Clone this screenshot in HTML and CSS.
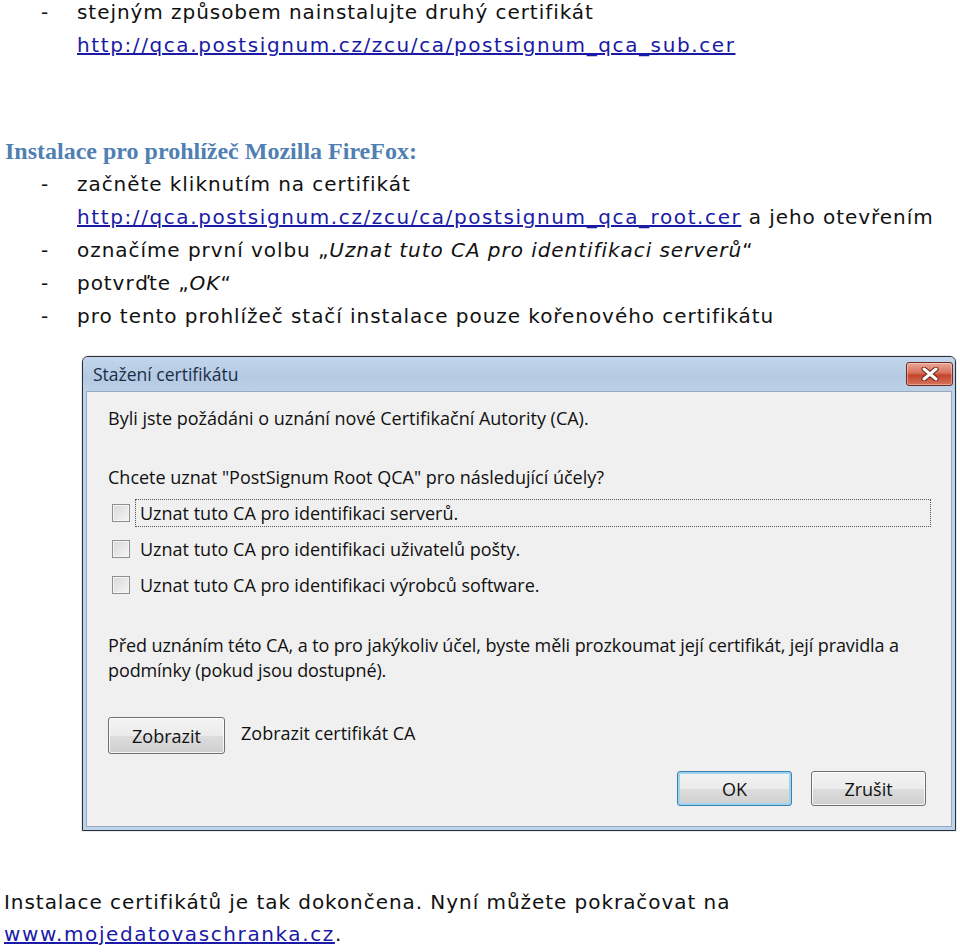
FILE: index.html
```html
<!DOCTYPE html>
<html lang="cs">
<head>
  <meta charset="UTF-8">
  <title>Instalace certifikátů</title>
  <link rel="stylesheet" href="styles.css">
</head>
<body>

  <div class="steps steps-top">
    <div class="step">
      <span class="dash">-</span>
      <span class="step-text">stejným způsobem nainstalujte druhý certifikát<br>
        <a href="#">http://qca.postsignum.cz/zcu/ca/postsignum_qca_sub.cer</a></span>
    </div>
  </div>

  <h2 class="heading">Instalace pro prohlížeč Mozilla FireFox:</h2>

  <div class="steps">
    <div class="step">
      <span class="dash">-</span>
      <span class="step-text">začněte kliknutím na certifikát<br>
        <a href="#">http://qca.postsignum.cz/zcu/ca/postsignum_qca_root.cer</a> a jeho otevřením</span>
    </div>
    <div class="step">
      <span class="dash">-</span>
      <span class="step-text">označíme první volbu „<i>Uznat tuto CA pro identifikaci serverů</i>“</span>
    </div>
    <div class="step">
      <span class="dash">-</span>
      <span class="step-text">potvrďte „<i>OK</i>“</span>
    </div>
    <div class="step">
      <span class="dash">-</span>
      <span class="step-text">pro tento prohlížeč stačí instalace pouze kořenového certifikátu</span>
    </div>
  </div>

  <!-- screenshot of the Firefox dialog -->
  <div class="dialog">
    <div class="titlebar">
      <span class="title">Stažení certifikátu</span>
      <span class="close">
        <svg width="22" height="14" viewBox="0 0 22 14">
          <path d="M5 2 L17 12 M17 2 L5 12" stroke="#6a2418" stroke-width="5" stroke-linecap="round"/>
          <path d="M5 2 L17 12 M17 2 L5 12" stroke="#ffffff" stroke-width="3" stroke-linecap="round"/>
        </svg>
      </span>
    </div>
    <div class="content">
      <p class="line">Byli jste požádáni o uznání nové Certifikační Autority (CA).</p>
      <p class="line question">Chcete uznat "PostSignum Root QCA" pro následující účely?</p>

      <div class="checks">
        <label class="check"><span class="box"></span><span class="check-label focused">Uznat tuto CA pro identifikaci serverů.</span></label>
        <label class="check"><span class="box"></span><span class="check-label">Uznat tuto CA pro identifikaci uživatelů pošty.</span></label>
        <label class="check"><span class="box"></span><span class="check-label">Uznat tuto CA pro identifikaci výrobců software.</span></label>
      </div>

      <p class="warning">Před uznáním této CA, a to pro jakýkoliv účel, byste měli prozkoumat její certifikát, její pravidla a podmínky (pokud jsou dostupné).</p>

      <div class="view-row">
        <button class="btn btn-view">Zobrazit</button>
        <span>Zobrazit certifikát CA</span>
      </div>

      <div class="actions">
        <button class="btn btn-default">OK</button>
        <button class="btn">Zrušit</button>
      </div>
    </div>
  </div>

  <p class="footer">Instalace certifikátů je tak dokončena. Nyní můžete pokračovat na<br>
    <a href="#">www.mojedatovaschranka.cz</a>.</p>

</body>
</html>
```

FILE: styles.css
```css
/* Page */
body {
  margin: 0;
  background: #fff;
  color: #111;
  font-family: 'DejaVu Sans', sans-serif;
  font-size: 20px;
  letter-spacing: 0.95px;
  line-height: 33px;
}

a {
  color: #1a1aa6;
  text-decoration: underline;
  letter-spacing: 1.6px;
}

.steps-top {
  margin-top: -4px;
}

.step {
  display: flex;
}

.dash {
  width: 36px;
  padding-left: 41px;
  flex-shrink: 0;
}

.step-text i {
  font-style: italic;
}

.heading {
  margin: 73px 0 0 5px;
  font-family: 'Liberation Serif', serif;
  font-size: 24px;
  font-weight: bold;
  letter-spacing: 0;
  line-height: 33px;
  color: #4f7fb3;
}

/* Dialog */
.dialog {
  margin: 23px 0 0 82px;
  width: 872px;
  border: 1px solid #27303a;
  border-radius: 6px 6px 0 0;
  background: #bcd3ea;
  font-family: 'Open Sans', sans-serif;
  font-size: 18px;
  letter-spacing: 0;
  color: #111;
  box-shadow: 0 0 0 1px rgba(0, 0, 0, 0.08);
}

.titlebar {
  height: 34px;
  display: flex;
  align-items: center;
  justify-content: space-between;
  padding: 0 2px 0 10px;
  background: linear-gradient(#c3d6ec, #b4cae2 60%, #bdd1e7);
  border-radius: 5px 5px 0 0;
}

.title {
  color: #1b2d48;
  font-size: 17.5px;
}

.close {
  width: 45px;
  height: 22px;
  display: flex;
  align-items: center;
  justify-content: center;
  border: 1px solid #6d2d23;
  border-radius: 3px;
  background: linear-gradient(#e9a898, #d7715c 45%, #c4442c 55%, #d6735a);
  box-shadow: inset 0 0 0 1px rgba(255, 255, 255, 0.35);
}

.content {
  margin: 0 3px 3px 3px;
  padding: 14px 20px 20px 21px;
  background: #f0f0f0;
  border: 1px solid #97aac0;
  line-height: 24px;
}

.line {
  margin: 0;
}

.question {
  margin-top: 35px;
}

.checks {
  margin-top: 6px;
}

.check {
  display: flex;
  align-items: center;
  height: 36px;
  padding-left: 4px;
}

.box {
  width: 16px;
  height: 16px;
  border: 1px solid #8f8f8f;
  background: linear-gradient(135deg, #d8d8d8, #f6f6f6);
  box-shadow: inset 0 0 0 1px #f4f4f4;
  margin-right: 5px;
  flex-shrink: 0;
}

.check-label {
  padding: 1px 4px;
  border: 1px dotted transparent;
}

.check-label.focused {
  flex: 1;
  border-color: #555;
}

.warning {
  margin: 30px 0 0 0;
  line-height: 25px;
  letter-spacing: -0.1px;
}

.view-row {
  display: flex;
  align-items: center;
  gap: 16px;
  margin-top: 34px;
}

.view-row span {
  margin-top: -5px;
}

.btn {
  font-family: 'Open Sans', sans-serif;
  font-size: 18px;
  color: #111;
  width: 115px;
  height: 35px;
  border: 1px solid #707070;
  border-radius: 3px;
  background: linear-gradient(#f3f3f3, #ebebeb 50%, #dddddd 51%, #cfcfcf);
  box-shadow: inset 0 0 0 1px rgba(255, 255, 255, 0.8);
  padding: 0;
}

.btn-view {
  width: 117px;
  height: 37px;
}

.actions {
  display: flex;
  justify-content: flex-end;
  gap: 19px;
  margin-top: 17px;
  padding-right: 5px;
}

.btn-default {
  border-color: #3c7fb1;
  box-shadow: inset 0 0 0 2px #9ed3ee;
}

/* Footer */
.footer {
  margin: 55px 0 0 4px;
  line-height: 32px;
}
```
